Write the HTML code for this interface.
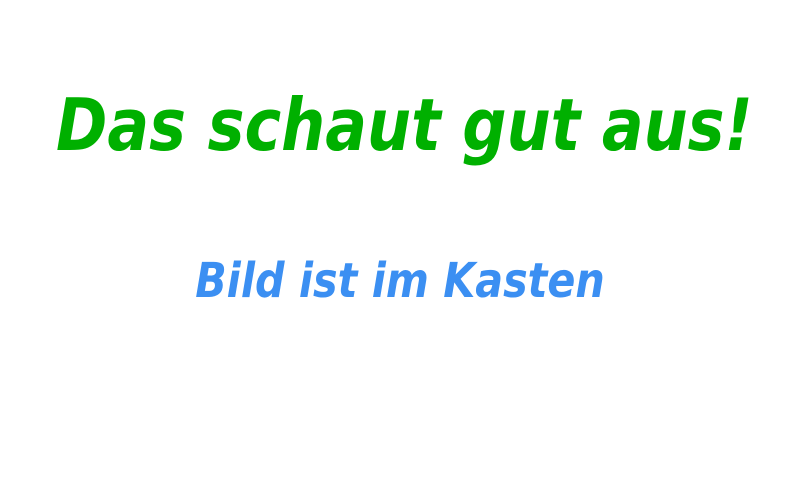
<!DOCTYPE html>
<html><head><meta charset="utf-8"><style>
html,body{margin:0;padding:0;background:#fff;width:800px;height:480px;overflow:hidden}
.t{position:absolute;left:0;width:800px;text-align:center;font-family:"DejaVu Sans","Liberation Sans",sans-serif;font-style:oblique;white-space:nowrap}
#a{top:83px;font-size:72px;color:#00b000;font-weight:bold;transform:scaleX(0.86);transform-origin:400px 0}
#b{top:253px;font-size:48px;color:#3b8ff2;font-weight:bold;transform:scaleX(0.86);transform-origin:400px 0}
</style></head><body>
<div class="t" id="a">Das schaut gut aus!</div>
<div class="t" id="b">Bild ist im Kasten</div>
</body></html>
